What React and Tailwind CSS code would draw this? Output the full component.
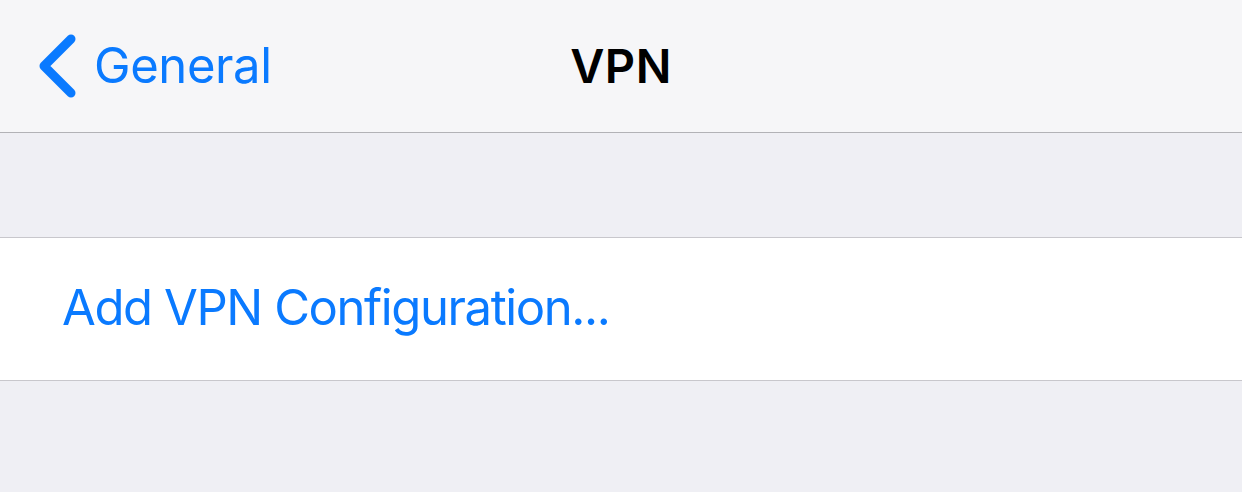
import React from "react";

export default function App() {
  return (
    <div
      className="w-[1242px] h-[492px] bg-[#efeff4] flex flex-col overflow-hidden"
      style={{ fontFamily: "Inter, 'Liberation Sans', sans-serif" }}
    >
      {/* NAV BAR */}
      <div className="relative h-[133px] shrink-0 bg-[#f6f6f8] border-b border-[#b2b2b6] flex items-center">
        <div className="flex items-center pl-[38px] pb-[2px] text-[#0a7aff]">
          <svg width="40" height="64" viewBox="0 0 40 64" className="mt-[1px]">
            <path
              d="M33 5 L6 32 L33 59"
              fill="none"
              stroke="currentColor"
              strokeWidth="9"
              strokeLinecap="round"
              strokeLinejoin="round"
            />
          </svg>
          <span className="ml-[16px] text-[49px] leading-none tracking-[-0.4px]">General</span>
        </div>
        <div className="absolute inset-x-0 top-0 h-full flex items-center justify-center pointer-events-none">
          <span className="text-[47px] font-semibold leading-none text-black pb-[2px] tracking-[0.5px]">VPN</span>
        </div>
      </div>

      {/* SPACER */}
      <div className="h-[104px] shrink-0" />

      {/* ROW */}
      <div className="h-[144px] shrink-0 bg-white border-y border-[#c8c7cc] flex items-center pl-[62px] pb-[3px]">
        <span className="text-[49px] leading-none text-[#0a7aff] tracking-[-1.4px]">
          Add VPN Configuration...
        </span>
      </div>
    </div>
  );
}
